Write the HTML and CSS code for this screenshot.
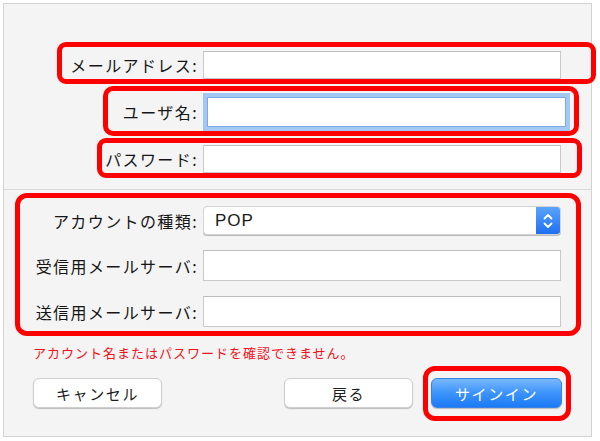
FILE: index.html
```html
<!DOCTYPE html>
<html lang="ja">
<head>
<meta charset="utf-8">
<title>アカウント</title>
<link rel="stylesheet" href="styles.css">
</head>
<body>
<div class="window">
  <div class="fields top">
    <label class="label">メールアドレス:</label>
    <div class="input"></div>
    <label class="label">ユーザ名:</label>
    <div class="input focus"></div>
    <label class="label">パスワード:</label>
    <div class="input"></div>
  </div>
  <div class="separator"></div>
  <div class="fields bottom">
    <label class="label">アカウントの種類:</label>
    <div class="popup">
      <span class="popup-text">POP</span>
      <span class="stepper">
        <svg width="12" height="18" viewBox="0 0 12 18"><path d="M2.5 6.5 L6 3 L9.5 6.5 M2.5 11.5 L6 15 L9.5 11.5" fill="none" stroke="#fff" stroke-width="1.8" stroke-linecap="round" stroke-linejoin="round"/></svg>
      </span>
    </div>
    <label class="label">受信用メールサーバ:</label>
    <div class="input tall"></div>
    <label class="label">送信用メールサーバ:</label>
    <div class="input tall"></div>
  </div>
  <p class="error">アカウント名またはパスワードを確認できません。</p>
  <div class="buttons">
    <button class="btn">キャンセル</button>
    <span class="spacer"></span>
    <button class="btn">戻る</button>
    <button class="btn primary">サインイン</button>
  </div>

  <div class="mark mark-email"></div>
  <div class="mark mark-user"></div>
  <div class="mark mark-pass"></div>
  <div class="mark mark-server"></div>
  <div class="mark mark-signin"></div>
</div>
</body>
</html>
```

FILE: styles.css
```css
html, body {
  margin: 0;
  padding: 0;
  background: #ffffff;
}

body {
  font-family: "Noto Sans CJK JP", "Noto Sans", sans-serif;
  color: #1d1d1d;
}

.window {
  position: relative;
  box-sizing: border-box;
  margin: 3px 0 0 3px;
  width: 589px;
  height: 434px;
  border: 1px solid #d2d2d2;
  background: #f4f4f4;
}

.fields {
  display: grid;
  grid-template-columns: 195px 358px;
  column-gap: 4px;
  align-items: center;
}

.fields.top {
  padding: 47px 0 16px;
  grid-auto-rows: 28px;
  row-gap: 19px;
}

.fields.bottom {
  padding-top: 16px;
  grid-template-rows: 29px 31px 31px;
  row-gap: 15px;
}

.label {
  text-align: right;
  font-size: 16px;
  line-height: 20px;
  letter-spacing: 1.4px;
  padding-right: 1px;
  white-space: nowrap;
  color: #161616;
}

.input {
  box-sizing: border-box;
  height: 100%;
  background: #ffffff;
  border: 1px solid #c9c9c9;
  border-top-color: #bdbdbd;
}

.input.focus {
  border-color: #7fa9e4;
  box-shadow: 0 0 0 4px #a4c8f4;
  margin-left: 4px;
  width: 359px;
  height: 30px;
}

.separator {
  height: 1px;
  background: #dadada;
}

.popup {
  box-sizing: border-box;
  height: 100%;
  display: flex;
  align-items: center;
  background: #ffffff;
  border: 1px solid #d4d4d4;
  border-radius: 4px;
  box-shadow: 0 1px 0 #b9b9b9;
  overflow: hidden;
}

.popup-text {
  flex: 1;
  padding-left: 11px;
  font-family: "Liberation Sans", "Noto Sans", sans-serif;
  font-size: 17px;
  letter-spacing: 1px;
  color: #1a1a1a;
}

.stepper {
  width: 24px;
  align-self: stretch;
  display: flex;
  align-items: center;
  justify-content: center;
  background: linear-gradient(#5aa4fb, #1f6ff3);
}

.error {
  margin: 17px 0 0;
  padding-left: 29px;
  font-size: 13px;
  line-height: 18px;
  letter-spacing: 1px;
  color: #f0131b;
}

.buttons {
  display: flex;
  align-items: center;
  margin-top: 16px;
  padding: 0 29px;
  gap: 18px;
}

.spacer {
  flex: 1;
}

.btn {
  box-sizing: border-box;
  width: 129px;
  height: 30px;
  padding: 0;
  font-family: "Noto Sans CJK JP", "Noto Sans", sans-serif;
  font-size: 15px;
  letter-spacing: 1.6px;
  color: #1d1d1d;
  background: #ffffff;
  border: 1px solid #cfcfcf;
  border-radius: 6px;
  box-shadow: 0 1px 1px #bdbdbd;
}

.btn.primary {
  width: 131px;
  color: #ffffff;
  border-color: #3b82e6;
  background: linear-gradient(#79b8fb, #3d93fb 50%, #1a7af6);
}

.mark {
  position: absolute;
  box-sizing: border-box;
  border: 5px solid #ff0000;
  pointer-events: none;
}

.mark-email {
  left: 53px;
  top: 38px;
  width: 539px;
  height: 42px;
  border-radius: 9px;
}

.mark-user {
  left: 99px;
  top: 82px;
  width: 476px;
  height: 50px;
  border-radius: 10px;
}

.mark-pass {
  left: 93px;
  top: 134px;
  width: 485px;
  height: 40px;
  border-radius: 9px;
}

.mark-server {
  left: 11px;
  top: 189px;
  width: 566px;
  height: 143px;
  border-radius: 12px;
}

.mark-signin {
  left: 419px;
  top: 362px;
  width: 148px;
  height: 55px;
  border-radius: 12px;
}
```
